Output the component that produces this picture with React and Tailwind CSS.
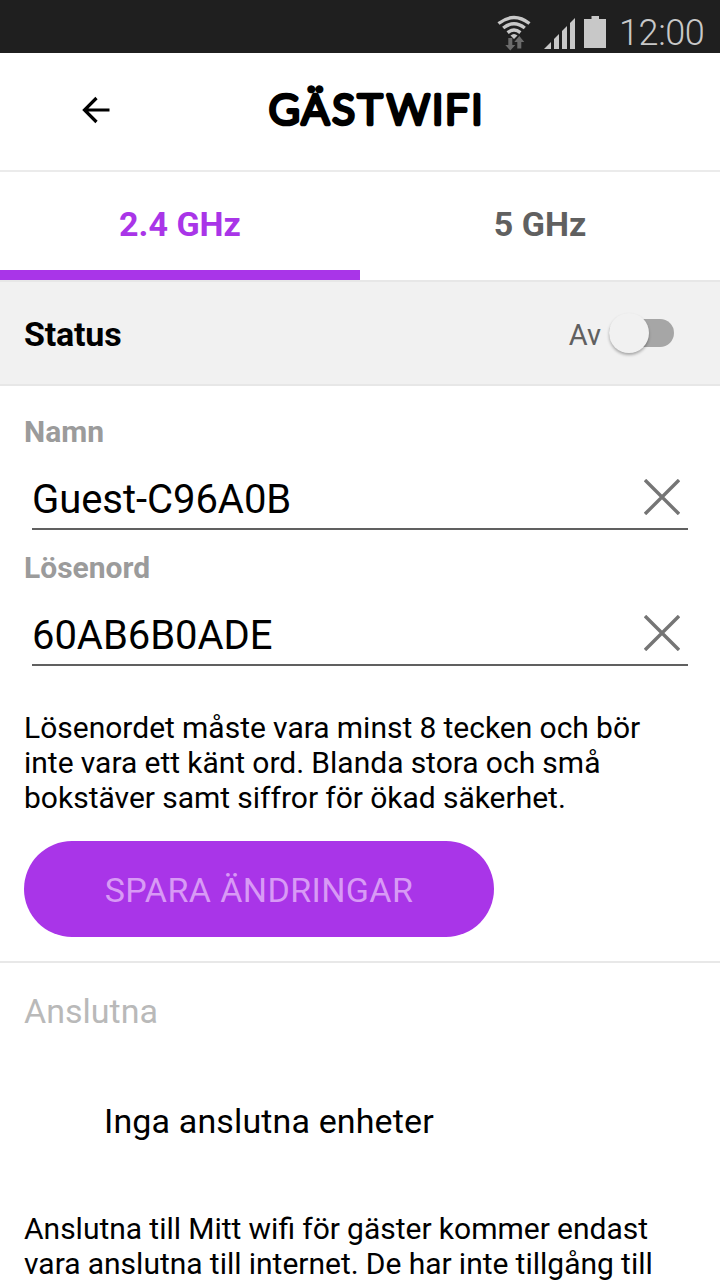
import { useState } from 'react';

const INFO_PASSWORD = [
  'Lösenordet måste vara minst 8 tecken och bör',
  'inte vara ett känt ord. Blanda stora och små',
  'bokstäver samt siffror för ökad säkerhet.',
];

const INFO_GUESTS = [
  'Anslutna till Mitt wifi för gäster kommer endast',
  'vara anslutna till internet. De har inte tillgång till',
];

function StatusBar() {
  return (
    <div className="flex h-[53px] shrink-0 items-center justify-end bg-[#1f1f1f] pr-[14px]">
      <svg className="h-[53px] w-[124px]" viewBox="0 0 124 53" fill="none">
        {/* wifi */}
        <g stroke="#c8c8c8" strokeWidth="3.4">
          <path d="M3.500 23.500Q19 11.500 34.500 23.500" />
          <path d="M8.200 28Q19 19.600 29.800 28" />
          <path d="M12.600 32.600Q19 27.600 25.400 32.600" />
        </g>
        <path d="M15.500 35.500Q19 32.500 22.500 35.500L19 39Z" fill="#c8c8c8" />
        <g fill="#6b6b6b">
          <path d="M13.300 38h4v7h3L15.300 50.500 10.300 45h3z" />
          <path d="M22.300 48.500v-6.500h-3L24.300 36l5 6h-3v6.500z" />
        </g>
        {/* signal */}
        <g fill="#c8c8c8">
          <path d="M49 49l7-7v7z" />
          <path d="M59 49V39l5-5v15z" />
          <path d="M67 49V31l5-5v23z" />
          <path d="M75 49V23l5-5v31z" />
          {/* battery */}
          <path d="M89 48V19h7.500v-3h7.500v3h7v29z" />
        </g>
      </svg>
      <span className="mt-[13px] w-[87px] whitespace-nowrap text-[36px] leading-[42px] font-light tracking-[-0.4px] text-[#c8c8c8]">12:00</span>
    </div>
  );
}

function Header() {
  return (
    <header className="flex h-[119px] shrink-0 items-center border-b-2 border-[#ebebeb] pb-[3px]">
      <button className="ml-[81px]">
        <svg className="h-7 w-[30px]" viewBox="0 0 30 28" fill="none" stroke="#000" strokeWidth="3.200">
          <path d="M28.500 14H4M15.500 2L3.500 14l12 12" />
        </svg>
      </button>
      <h1 className="ml-[149px]">
        <svg className="h-[60px] w-[240px]" viewBox="260 80 240 60">
          <text
            x="269 301.700 332.500 358 387.300 432.300 445.200 471.600"
            y="123.500"
            fontSize="41.5"
            fontWeight="300"
            stroke="#000"
            strokeWidth="4.700"
            strokeLinejoin="round"
            className="font-['Lato',sans-serif]"
          >
            GÄSTWIFI
          </text>
        </svg>
      </h1>
    </header>
  );
}

function Tab({ label, active, onClick }) {
  return (
    <button
      onClick={onClick}
      className={`flex-1 border-b-[10px] pt-[6px] text-[34px] leading-10 font-bold ${
        active ? 'border-[#a935e8] text-[#a935e8]' : 'border-transparent text-[#606060]'
      }`}
    >
      {label}
    </button>
  );
}

function Field({ label, value }) {
  return (
    <div className="h-[136px]">
      <div className="px-6 text-[30px] leading-9 font-bold text-[#9b9b9b]">{label}</div>
      <div className="mx-8 mt-[18px] flex h-[62px] items-center justify-between border-b-2 border-[#606060] pr-2">
        <span className="pt-1 text-[40px] leading-[60px] tracking-[-0.05px]">{value}</span>
        <svg className="mb-0.5 h-9 w-9" viewBox="0 0 36 36" stroke="#757575" strokeWidth="3.400">
          <path d="M1 1l34 34M35 1L1 35" />
        </svg>
      </div>
    </div>
  );
}

function Info({ lines }) {
  return (
    <p className="px-6 text-[30px] leading-[35px] whitespace-nowrap [word-spacing:-0.25px]">
      {lines.map((line) => (
        <span key={line} className="block">{line}</span>
      ))}
    </p>
  );
}

export default function App() {
  const [band, setBand] = useState('2.4');

  return (
    <div className="flex h-[1280px] w-[720px] flex-col overflow-hidden bg-white font-['Roboto',sans-serif] text-black">
      <StatusBar />
      <Header />

      <div className="flex h-[108px] shrink-0">
        <Tab label="2.4 GHz" active={band === '2.4'} onClick={() => setBand('2.4')} />
        <Tab label="5 GHz" active={band === '5'} onClick={() => setBand('5')} />
      </div>

      <div className="flex h-[106px] shrink-0 items-center border-t-2 border-b-2 border-[#e7e7e7] bg-[#f1f1f1] pr-[46px] pl-6">
        <span className="mt-px text-[34px] leading-10 font-bold tracking-[-0.2px]">Status</span>
        <span className="mt-[3px] ml-auto text-[29px] leading-9 text-[#606060]">Av</span>
        <div className="ml-[8px] flex h-7 w-[65px] items-center rounded-full bg-[#a6a6a6]">
          <div className="h-10 w-10 shrink-0 rounded-full bg-[#f1f1f1] shadow-[0_2px_3px_rgba(0,0,0,0.3)]" />
        </div>
      </div>

      <div className="shrink-0 pt-7">
        <Field label="Namn" value="Guest-C96A0B" />
        <Field label="Lösenord" value="60AB6B0ADE" />
      </div>

      <div className="shrink-0 border-b-2 border-[#e8e8e8] pt-6 pb-6">
        <Info lines={INFO_PASSWORD} />
        <button className="mt-[26px] ml-6 block h-24 w-[470px] rounded-full bg-[#a935e8] pt-[2px] text-[34px] leading-10 tracking-[0.4px] text-[#d89af5]">
          SPARA ÄNDRINGAR
        </button>
      </div>

      <div className="shrink-0 pt-7">
        <h2 className="px-6 text-[34px] leading-10 text-[#b9b9b9]">Anslutna</h2>
        <p className="mt-[70px] mb-[70px] pl-[104px] text-[34px] leading-10 tracking-[0.14px]">Inga anslutna enheter</p>
        <Info lines={INFO_GUESTS} />
      </div>
    </div>
  );
}
